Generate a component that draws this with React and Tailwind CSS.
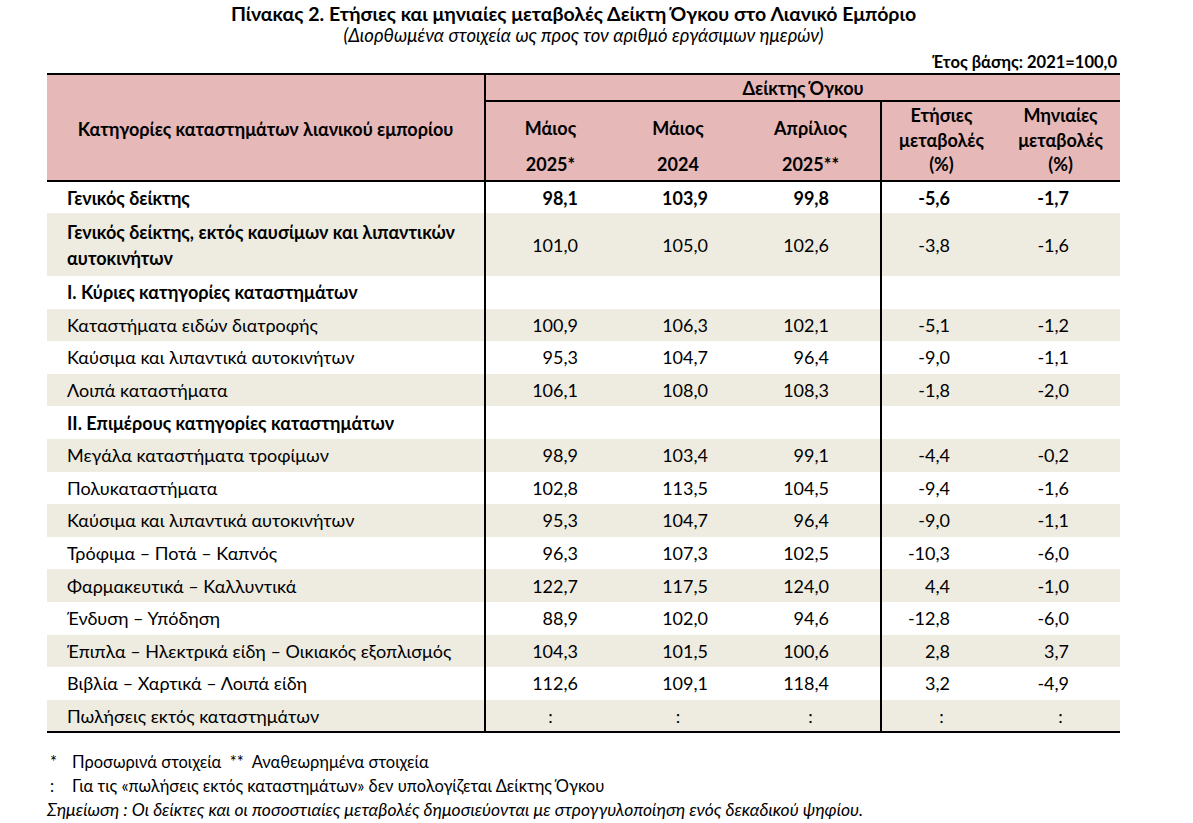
import React from 'react';

const rows = [
  { label: 'Γενικός δείκτης', vals: ['98,1', '103,9', '99,8', '-5,6', '-1,7'], bold: true },
  { label: 'Γενικός δείκτης, εκτός καυσίμων και λιπαντικών αυτοκινήτων', vals: ['101,0', '105,0', '102,6', '-3,8', '-1,6'], boldLabel: true, tall: true },
  { label: 'Ι. Κύριες κατηγορίες καταστημάτων', section: true },
  { label: 'Καταστήματα ειδών διατροφής', vals: ['100,9', '106,3', '102,1', '-5,1', '-1,2'] },
  { label: 'Καύσιμα και λιπαντικά αυτοκινήτων', vals: ['95,3', '104,7', '96,4', '-9,0', '-1,1'] },
  { label: 'Λοιπά καταστήματα', vals: ['106,1', '108,0', '108,3', '-1,8', '-2,0'] },
  { label: 'ΙΙ. Επιμέρους κατηγορίες καταστημάτων', section: true },
  { label: 'Μεγάλα καταστήματα τροφίμων', vals: ['98,9', '103,4', '99,1', '-4,4', '-0,2'] },
  { label: 'Πολυκαταστήματα', vals: ['102,8', '113,5', '104,5', '-9,4', '-1,6'] },
  { label: 'Καύσιμα και λιπαντικά αυτοκινήτων', vals: ['95,3', '104,7', '96,4', '-9,0', '-1,1'] },
  { label: 'Τρόφιμα – Ποτά – Καπνός', vals: ['96,3', '107,3', '102,5', '-10,3', '-6,0'] },
  { label: 'Φαρμακευτικά – Καλλυντικά', vals: ['122,7', '117,5', '124,0', '4,4', '-1,0'] },
  { label: 'Ένδυση – Υπόδηση', vals: ['88,9', '102,0', '94,6', '-12,8', '-6,0'] },
  { label: 'Έπιπλα – Ηλεκτρικά είδη – Οικιακός εξοπλισμός', vals: ['104,3', '101,5', '100,6', '2,8', '3,7'] },
  { label: 'Βιβλία – Χαρτικά – Λοιπά είδη', vals: ['112,6', '109,1', '118,4', '3,2', '-4,9'] },
  { label: 'Πωλήσεις εκτός καταστημάτων', vals: [':', ':', ':', ':', ':'], colon: true },
];

const padRight = ['pr-[37px]', 'pr-[33px]', 'pr-[51px]', 'pr-[51px]', 'pr-[51px]'];

const App = () => {
  return (
    <div className="w-[1193px] h-[823px] bg-white text-black font-['Lato','Noto_Sans',sans-serif] text-[18px] leading-none">
      <div className="w-[1073px] ml-[47px]">
        <div className="pt-[4px] text-center font-bold text-[19.5px] h-[22px] leading-[20px] -ml-[20px]">
          Πίνακας 2. Ετήσιες και μηνιαίες μεταβολές Δείκτη Όγκου στο Λιανικό Εμπόριο
        </div>
        <div className="mt-[3px] text-center italic text-[18.5px] h-[21px] leading-[20px]">
          (Διορθωμένα στοιχεία ως προς τον αριθμό εργάσιμων ημερών)
        </div>
        <div className="mt-[7px] text-right font-bold text-[16.5px] pr-[3px] h-[19px] leading-[19px]">
          Έτος βάσης: 2021=100,0
        </div>

        <table className="mt-[1px] w-[1073px] table-fixed border-collapse">
          <colgroup>
            <col className="w-[438px]" />
            <col className="w-[130px]" />
            <col className="w-[126px]" />
            <col className="w-[140px]" />
            <col className="w-[120px]" />
            <col className="w-[119px]" />
          </colgroup>
          <thead className="bg-[#e6b8b7] font-bold">
            <tr className="border-t-2 border-black">
              <th rowSpan={2} className="border-r-2 border-black text-center font-bold pt-[2px]">
                Κατηγορίες καταστημάτων λιανικού εμπορίου
              </th>
              <th colSpan={5} className="h-[27px] border-b-2 border-black text-center font-bold">
                Δείκτης Όγκου
              </th>
            </tr>
            <tr className="border-b-2 border-black">
              {['Μάιος|2025*', 'Μάιος|2024', 'Απρίλιος|2025**'].map((h, i) => (
                <th key={i} className={'h-[80px] align-top font-bold text-center pt-[14px] ' + (i === 2 ? 'border-r-2 border-black' : '')}>
                  <div className="leading-[24px]">{h.split('|')[0]}</div>
                  <div className="leading-[24px] mt-[12px]">{h.split('|')[1]}</div>
                </th>
              ))}
              {['Ετήσιες', 'Μηνιαίες'].map((h) => (
                <th key={h} className="align-top font-bold text-center pt-[1px]">
                  <div className="leading-[24.5px]">{h}</div>
                  <div className="leading-[24.5px]">μεταβολές</div>
                  <div className="leading-[24.5px]">(%)</div>
                </th>
              ))}
            </tr>
          </thead>
          <tbody className="border-b-2 border-black">
            {rows.map((row, index) => (
              <tr
                key={index}
                className={(index % 2 === 1 ? 'bg-[#eeece1] ' : 'bg-white ') + (row.tall ? 'h-[63px]' : index === 0 ? 'h-[32px]' : 'h-[32.6px]')}
              >
                <td className={'border-r-2 border-black pl-[20px] pr-[10px] leading-[26px] ' + (row.bold || row.boldLabel || row.section ? 'font-bold' : '')}>
                  {row.label}
                </td>
                {row.section
                  ? [0, 1, 2, 3, 4].map((i) => (
                      <td key={i} className={i === 2 ? 'border-r-2 border-black' : ''}></td>
                    ))
                  : row.vals.map((v, i) => (
                      <td
                        key={i}
                        className={
                          (row.colon ? 'text-center ' : 'text-right ' + padRight[i] + ' ') +
                          (row.bold ? 'font-bold ' : '') +
                          (i === 2 ? 'border-r-2 border-black' : '')
                        }
                      >
                        {v}
                      </td>
                    ))}
              </tr>
            ))}
          </tbody>
        </table>

        <div className="mt-[18px] text-[16.5px] leading-[23.5px]">
          <div className="flex">
            <span className="w-[25px] pl-[3px]">*</span>
            <span>Προσωρινά στοιχεία&nbsp;&nbsp;**&nbsp;&nbsp;Αναθεωρημένα στοιχεία</span>
          </div>
          <div className="flex">
            <span className="w-[25px] pl-[3px]">:</span>
            <span>Για τις «πωλήσεις εκτός καταστημάτων» δεν υπολογίζεται Δείκτης Όγκου</span>
          </div>
          <div className="italic text-[17.5px]">
            Σημείωση : Οι δείκτες και οι ποσοστιαίες μεταβολές δημοσιεύονται με στρογγυλοποίηση ενός δεκαδικού ψηφίου.
          </div>
        </div>
      </div>
    </div>
  );
};

export default App;
